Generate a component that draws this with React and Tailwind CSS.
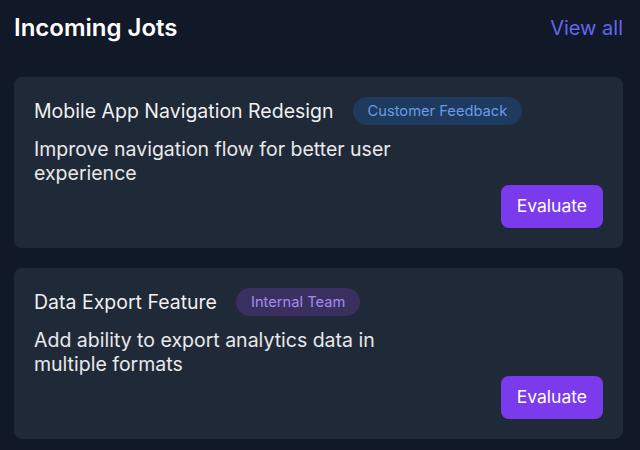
import React from 'react';

const jots = [
  {
    title: 'Mobile App Navigation Redesign',
    tag: 'Customer Feedback',
    tagClass: 'bg-[#1e3a5f] text-[#6b9be6]',
    desc: 'Improve navigation flow for better user experience',
  },
  {
    title: 'Data Export Feature',
    tag: 'Internal Team',
    tagClass: 'bg-[#3a3060] text-[#a58bf0]',
    desc: 'Add ability to export analytics data in multiple formats',
  },
];

export default function App() {
  return (
    <div className="min-h-[450px] bg-[#111827] pl-[14px] pr-[17px] pt-3 pb-4 font-['Inter',sans-serif]">
      <div className="flex items-center justify-between mb-[33px]">
        <h2 className="text-2xl leading-8 font-semibold text-white">Incoming Jots</h2>
        <a className="text-xl text-[#6366f1]">View all</a>
      </div>

      <div className="flex flex-col gap-5">
        {jots.map((jot) => (
          <div key={jot.title} className="bg-[#1f2937] rounded-lg p-5">
            <div className="flex items-center gap-[19px]">
              <h3 className="text-[19.5px] leading-7 text-white/95">{jot.title}</h3>
              <span className={`px-[15px] h-7 flex items-center rounded-full text-[14.7px] ${jot.tagClass}`}>{jot.tag}</span>
            </div>
            <p className="mt-3 text-[19.5px] leading-6 text-white/90 max-w-[380px]">{jot.desc}</p>
            <div className="flex justify-end">
              <button className="bg-[#7c3aed] text-white text-[17.5px] rounded-lg px-4 h-[43px]">Evaluate</button>
            </div>
          </div>
        ))}
      </div>
    </div>
  );
}
